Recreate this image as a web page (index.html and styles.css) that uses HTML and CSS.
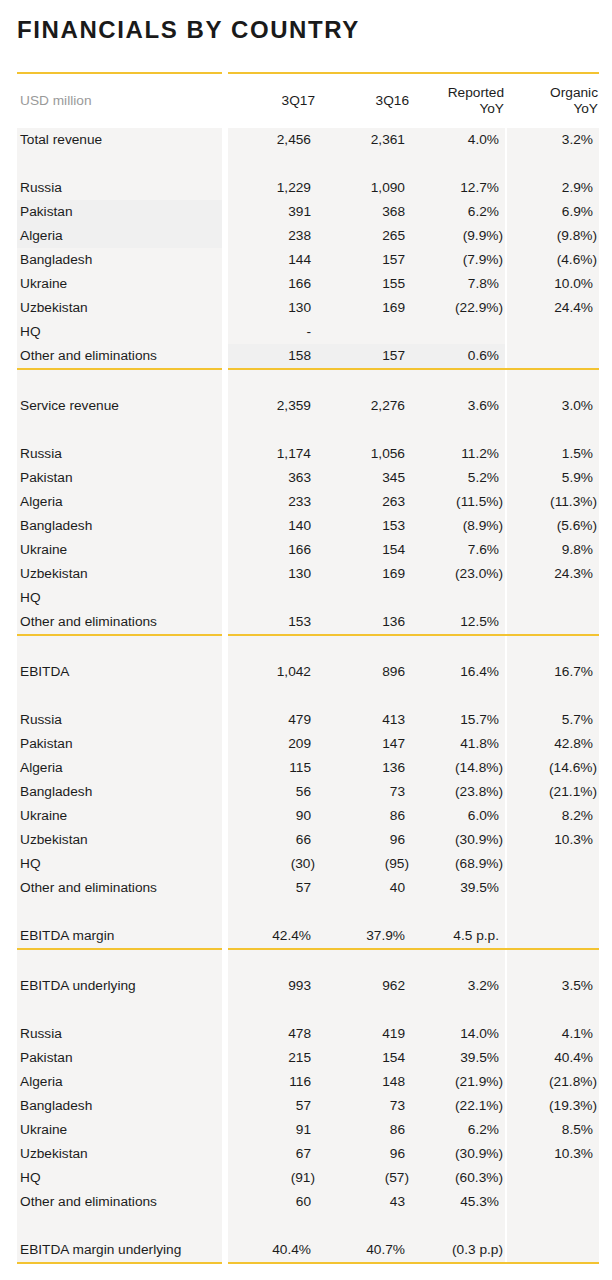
FILE: index.html
```html
<!DOCTYPE html>
<html>
<head>
<meta charset="utf-8">
<link rel="stylesheet" href="styles.css">
</head>
<body>
<div class="page">
  <h1 class="title">FINANCIALS BY COUNTRY</h1>
  <div class="table">
    <div class="sep"><div class="sep-l"></div><div class="sep-r"></div></div>
    <div class="row head">
      <div class="c lab muted">USD million</div>
      <div class="c n1">3Q17</div>
      <div class="c n2">3Q16</div>
      <div class="c n3">Reported<br>YoY</div>
      <div class="c org">Organic<br>YoY</div>
    </div>

    <div class="row"><div class="c lab">Total revenue</div><div class="c n1">2,456</div><div class="c n2">2,361</div><div class="c n3">4.0%</div><div class="c org">3.2%</div></div>
    <div class="row"><div class="c lab"></div><div class="c n1"></div><div class="c n2"></div><div class="c n3"></div><div class="c org"></div></div>
    <div class="row"><div class="c lab">Russia</div><div class="c n1">1,229</div><div class="c n2">1,090</div><div class="c n3">12.7%</div><div class="c org">2.9%</div></div>
    <div class="row"><div class="c lab cool">Pakistan</div><div class="c n1">391</div><div class="c n2">368</div><div class="c n3">6.2%</div><div class="c org">6.9%</div></div>
    <div class="row"><div class="c lab cool">Algeria</div><div class="c n1">238</div><div class="c n2">265</div><div class="c n3"><span class="neg">(9.9%)</span></div><div class="c org"><span class="neg">(9.8%)</span></div></div>
    <div class="row"><div class="c lab">Bangladesh</div><div class="c n1">144</div><div class="c n2">157</div><div class="c n3"><span class="neg">(7.9%)</span></div><div class="c org"><span class="neg">(4.6%)</span></div></div>
    <div class="row"><div class="c lab">Ukraine</div><div class="c n1">166</div><div class="c n2">155</div><div class="c n3">7.8%</div><div class="c org">10.0%</div></div>
    <div class="row"><div class="c lab">Uzbekistan</div><div class="c n1">130</div><div class="c n2">169</div><div class="c n3"><span class="neg">(22.9%)</span></div><div class="c org">24.4%</div></div>
    <div class="row"><div class="c lab">HQ</div><div class="c n1">-</div><div class="c n2"></div><div class="c n3"></div><div class="c org"></div></div>
    <div class="row"><div class="c lab">Other and eliminations</div><div class="c n1 cool">158</div><div class="c n2 cool">157</div><div class="c n3 cool">0.6%</div><div class="c org"></div></div>
    <div class="sep"><div class="sep-l"></div><div class="sep-r"></div></div>

    <div class="row"><div class="c lab"></div><div class="c n1"></div><div class="c n2"></div><div class="c n3"></div><div class="c org"></div></div>
    <div class="row"><div class="c lab">Service revenue</div><div class="c n1">2,359</div><div class="c n2">2,276</div><div class="c n3">3.6%</div><div class="c org">3.0%</div></div>
    <div class="row"><div class="c lab"></div><div class="c n1"></div><div class="c n2"></div><div class="c n3"></div><div class="c org"></div></div>
    <div class="row"><div class="c lab">Russia</div><div class="c n1">1,174</div><div class="c n2">1,056</div><div class="c n3">11.2%</div><div class="c org">1.5%</div></div>
    <div class="row"><div class="c lab">Pakistan</div><div class="c n1">363</div><div class="c n2">345</div><div class="c n3">5.2%</div><div class="c org">5.9%</div></div>
    <div class="row"><div class="c lab">Algeria</div><div class="c n1">233</div><div class="c n2">263</div><div class="c n3"><span class="neg">(11.5%)</span></div><div class="c org"><span class="neg">(11.3%)</span></div></div>
    <div class="row"><div class="c lab">Bangladesh</div><div class="c n1">140</div><div class="c n2">153</div><div class="c n3"><span class="neg">(8.9%)</span></div><div class="c org"><span class="neg">(5.6%)</span></div></div>
    <div class="row"><div class="c lab">Ukraine</div><div class="c n1">166</div><div class="c n2">154</div><div class="c n3">7.6%</div><div class="c org">9.8%</div></div>
    <div class="row"><div class="c lab">Uzbekistan</div><div class="c n1">130</div><div class="c n2">169</div><div class="c n3"><span class="neg">(23.0%)</span></div><div class="c org">24.3%</div></div>
    <div class="row"><div class="c lab">HQ</div><div class="c n1"></div><div class="c n2"></div><div class="c n3"></div><div class="c org"></div></div>
    <div class="row"><div class="c lab">Other and eliminations</div><div class="c n1">153</div><div class="c n2">136</div><div class="c n3">12.5%</div><div class="c org"></div></div>
    <div class="sep"><div class="sep-l"></div><div class="sep-r"></div></div>

    <div class="row"><div class="c lab"></div><div class="c n1"></div><div class="c n2"></div><div class="c n3"></div><div class="c org"></div></div>
    <div class="row"><div class="c lab">EBITDA</div><div class="c n1">1,042</div><div class="c n2">896</div><div class="c n3">16.4%</div><div class="c org">16.7%</div></div>
    <div class="row"><div class="c lab"></div><div class="c n1"></div><div class="c n2"></div><div class="c n3"></div><div class="c org"></div></div>
    <div class="row"><div class="c lab">Russia</div><div class="c n1">479</div><div class="c n2">413</div><div class="c n3">15.7%</div><div class="c org">5.7%</div></div>
    <div class="row"><div class="c lab">Pakistan</div><div class="c n1">209</div><div class="c n2">147</div><div class="c n3">41.8%</div><div class="c org">42.8%</div></div>
    <div class="row"><div class="c lab">Algeria</div><div class="c n1">115</div><div class="c n2">136</div><div class="c n3"><span class="neg">(14.8%)</span></div><div class="c org"><span class="neg">(14.6%)</span></div></div>
    <div class="row"><div class="c lab">Bangladesh</div><div class="c n1">56</div><div class="c n2">73</div><div class="c n3"><span class="neg">(23.8%)</span></div><div class="c org"><span class="neg">(21.1%)</span></div></div>
    <div class="row"><div class="c lab">Ukraine</div><div class="c n1">90</div><div class="c n2">86</div><div class="c n3">6.0%</div><div class="c org">8.2%</div></div>
    <div class="row"><div class="c lab">Uzbekistan</div><div class="c n1">66</div><div class="c n2">96</div><div class="c n3"><span class="neg">(30.9%)</span></div><div class="c org">10.3%</div></div>
    <div class="row"><div class="c lab">HQ</div><div class="c n1"><span class="neg">(30)</span></div><div class="c n2"><span class="neg">(95)</span></div><div class="c n3"><span class="neg">(68.9%)</span></div><div class="c org"></div></div>
    <div class="row"><div class="c lab">Other and eliminations</div><div class="c n1">57</div><div class="c n2">40</div><div class="c n3">39.5%</div><div class="c org"></div></div>
    <div class="row"><div class="c lab"></div><div class="c n1"></div><div class="c n2"></div><div class="c n3"></div><div class="c org"></div></div>
    <div class="row"><div class="c lab">EBITDA margin</div><div class="c n1">42.4%</div><div class="c n2">37.9%</div><div class="c n3">4.5 p.p.</div><div class="c org"></div></div>
    <div class="sep"><div class="sep-l"></div><div class="sep-r"></div></div>

    <div class="row"><div class="c lab"></div><div class="c n1"></div><div class="c n2"></div><div class="c n3"></div><div class="c org"></div></div>
    <div class="row"><div class="c lab">EBITDA underlying</div><div class="c n1">993</div><div class="c n2">962</div><div class="c n3">3.2%</div><div class="c org">3.5%</div></div>
    <div class="row"><div class="c lab"></div><div class="c n1"></div><div class="c n2"></div><div class="c n3"></div><div class="c org"></div></div>
    <div class="row"><div class="c lab">Russia</div><div class="c n1">478</div><div class="c n2">419</div><div class="c n3">14.0%</div><div class="c org">4.1%</div></div>
    <div class="row"><div class="c lab">Pakistan</div><div class="c n1">215</div><div class="c n2">154</div><div class="c n3">39.5%</div><div class="c org">40.4%</div></div>
    <div class="row"><div class="c lab">Algeria</div><div class="c n1">116</div><div class="c n2">148</div><div class="c n3"><span class="neg">(21.9%)</span></div><div class="c org"><span class="neg">(21.8%)</span></div></div>
    <div class="row"><div class="c lab">Bangladesh</div><div class="c n1">57</div><div class="c n2">73</div><div class="c n3"><span class="neg">(22.1%)</span></div><div class="c org"><span class="neg">(19.3%)</span></div></div>
    <div class="row"><div class="c lab">Ukraine</div><div class="c n1">91</div><div class="c n2">86</div><div class="c n3">6.2%</div><div class="c org">8.5%</div></div>
    <div class="row"><div class="c lab">Uzbekistan</div><div class="c n1">67</div><div class="c n2">96</div><div class="c n3"><span class="neg">(30.9%)</span></div><div class="c org">10.3%</div></div>
    <div class="row"><div class="c lab">HQ</div><div class="c n1"><span class="neg">(91)</span></div><div class="c n2"><span class="neg">(57)</span></div><div class="c n3"><span class="neg">(60.3%)</span></div><div class="c org"></div></div>
    <div class="row"><div class="c lab">Other and eliminations</div><div class="c n1">60</div><div class="c n2">43</div><div class="c n3">45.3%</div><div class="c org"></div></div>
    <div class="row"><div class="c lab"></div><div class="c n1"></div><div class="c n2"></div><div class="c n3"></div><div class="c org"></div></div>
    <div class="row"><div class="c lab">EBITDA margin underlying</div><div class="c n1">40.4%</div><div class="c n2">40.7%</div><div class="c n3"><span class="neg">(0.3 p.p)</span></div><div class="c org"></div></div>
    <div class="sep"><div class="sep-l"></div><div class="sep-r"></div></div>
  </div>
</div>
</body>
</html>
```

FILE: styles.css
```css
html, body {
  margin: 0;
  padding: 0;
  background: #ffffff;
}

.page {
  width: 582px;
  padding: 16px 13px 0 17px;
  font-family: "Liberation Sans", Arial, sans-serif;
  color: #1c1c1c;
}

.title {
  margin: 0;
  font-size: 24px;
  line-height: 28px;
  font-weight: bold;
  letter-spacing: 1.6px;
  color: #1a1a1a;
}

.table {
  margin-top: 28px;
  font-size: 13.7px;
}

.sep {
  display: flex;
  height: 2px;
}

.sep-l {
  width: 205px;
  background: #f3c331;
}

.sep-r {
  flex: 1;
  margin-left: 6px;
  background: #f3c331;
}

.row {
  display: flex;
  height: 24px;
  line-height: 24px;
}

.c {
  background: #f5f4f3;
  white-space: nowrap;
}

.lab {
  width: 205px;
  box-sizing: border-box;
  padding-left: 3px;
}

.n1, .n2, .n3, .org {
  box-sizing: border-box;
  text-align: right;
}

.n1 {
  width: 88px;
  margin-left: 6px;
  padding-right: 5px;
}

.n2 {
  width: 94px;
  padding-right: 5px;
}

.n3 {
  width: 95px;
  padding-right: 6px;
}

.org {
  width: 92px;
  margin-left: 2px;
  padding-right: 6px;
}

.neg {
  margin-right: -4px;
}

.cool {
  background: #f0f0f0;
}

.head {
  height: 54px;
  line-height: 16px;
  align-items: center;
}

.head .c {
  background: transparent;
  padding-right: 1px;
}

.head .lab {
  padding-left: 3px;
}

.muted {
  color: #9a9a9a;
}
```
